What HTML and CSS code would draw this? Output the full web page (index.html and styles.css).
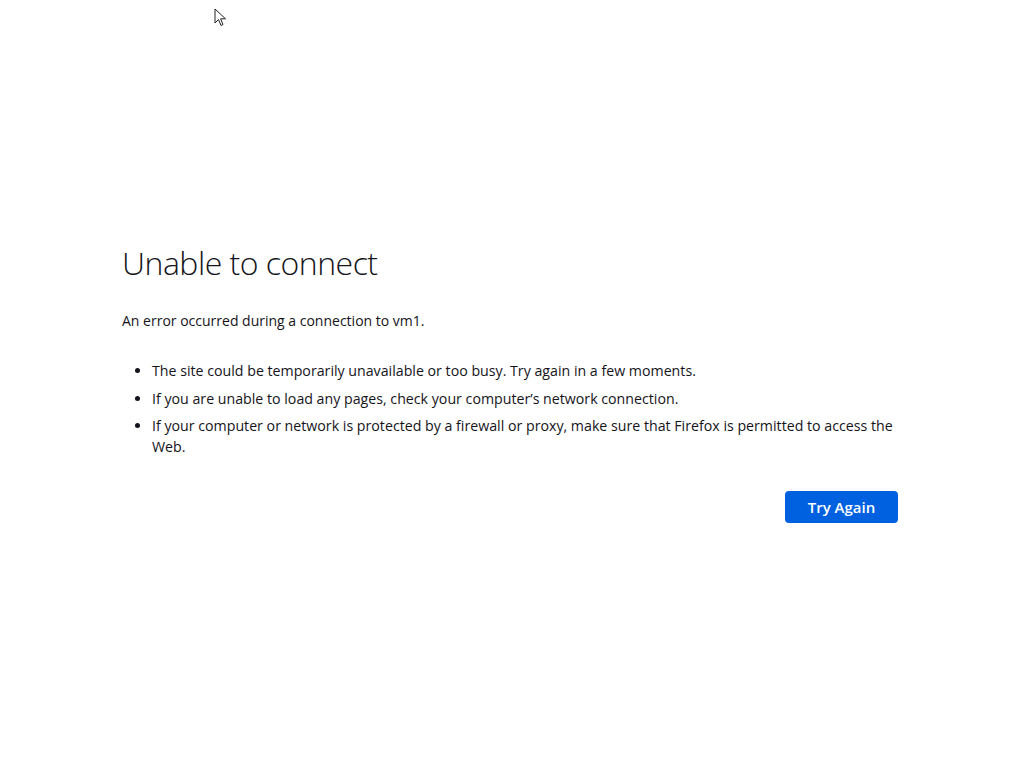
FILE: index.html
```html
<!DOCTYPE html>
<html>
<head>
<meta charset="utf-8">
<link rel="stylesheet" href="styles.css">
</head>
<body>
<svg class="cursor" width="14" height="20" viewBox="0 0 14 20"><path d="M1 1 L1 15 L4.5 11.5 L7 17.5 L9 16.6 L6.6 10.8 L11.5 10.8 Z" fill="#fff" stroke="#222" stroke-width="1" stroke-linejoin="round"/></svg>
<main class="error">
  <h1 class="title">Unable to connect</h1>
  <p class="desc">An error occurred during a connection to vm1.</p>
  <ul class="tips">
    <li>The site could be temporarily unavailable or too busy. Try again in a few moments.</li>
    <li>If you are unable to load any pages, check your computer’s network connection.</li>
    <li>If your computer or network is protected by a firewall or proxy, make sure that Firefox is permitted to access the Web.</li>
  </ul>
  <div class="actions"><button class="retry">Try Again</button></div>
</main>
</body>
</html>
```
FILE: styles.css
```css
html, body { margin: 0; padding: 0; background: #fff; }
body { font-family: "Open Sans", "Noto Sans", sans-serif; color: #15141a; width: 1024px; height: 768px; position: relative; overflow: hidden; }
.cursor { position: absolute; left: 214px; top: 8px; }
.error { width: 776px; margin-left: 122px; padding-top: 238px; }
.title { font-weight: 300; font-size: 32px; margin: 0; line-height: 50px; letter-spacing: -0.5px; color: #15141a; }
.desc { font-size: 14px; margin: 22px 0 0; line-height: 22px; }
.tips { margin: 28px 0 0; padding-left: 30px; font-size: 14.2px; line-height: 21px; }
.tips li { margin-bottom: 6.5px; }
.actions { display: flex; justify-content: flex-end; margin-top: 34px; }
.retry { width: 113px; height: 32px; border: none; border-radius: 4px; background: #0061e0; color: #fff; font-family: inherit; font-size: 15px; font-weight: 600; padding: 0; }
```
